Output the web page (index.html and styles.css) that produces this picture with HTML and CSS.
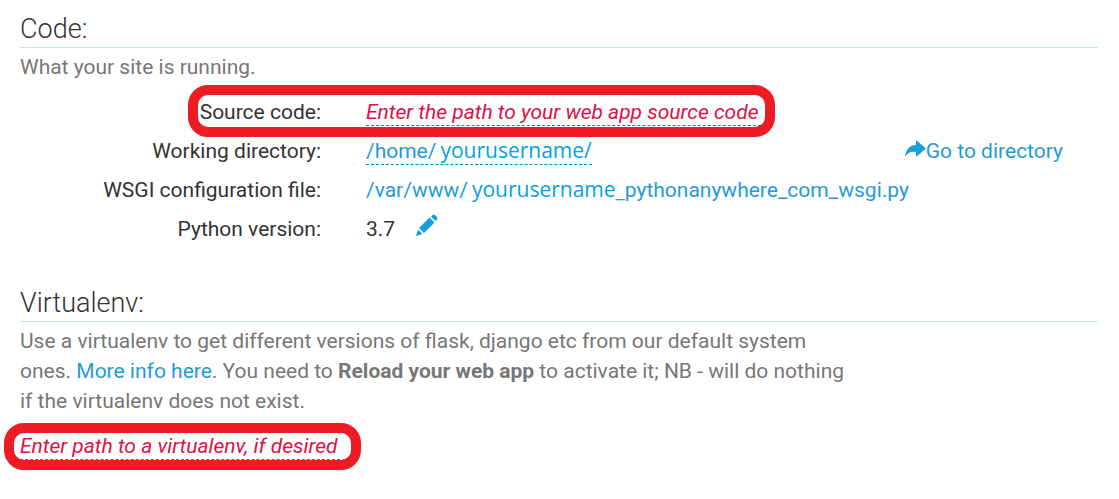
FILE: index.html
```html
<!DOCTYPE html>
<html lang="en">
<head>
<meta charset="utf-8">
<title>Web app configuration</title>
<link rel="stylesheet" href="styles.css">
</head>
<body>
<main class="page">
  <section class="section">
    <h2 class="heading">Code:</h2>
    <p class="intro">What your site is running.</p>
    <dl class="settings">
      <div class="row row-marked">
        <dt class="label">Source code:</dt>
        <dd class="value"><a class="editable empty" href="#source">Enter the path to your web app source code</a></dd>
      </div>
      <div class="row">
        <dt class="label">Working directory:</dt>
        <dd class="value"><a class="editable" href="#working">/home/<span class="username">yourusername/</span></a></dd>
        <dd class="action"><a class="link goto" href="#files"><svg class="icon" viewBox="0 0 21 18" aria-hidden="true"><path d="M0 17C1 9 5 5 11 5V0L21 8.500L11 17V12C6 11 2 13 0 17Z"/></svg>Go to directory</a></dd>
      </div>
      <div class="row">
        <dt class="label">WSGI configuration file:</dt>
        <dd class="value"><a class="link" href="#wsgi">/var/www/<span class="username">yourusername_</span>pythonanywhere_com_wsgi.py</a></dd>
      </div>
      <div class="row">
        <dt class="label">Python version:</dt>
        <dd class="value version">3.7<button class="edit" type="button" aria-label="Edit Python version"><svg class="pencil" viewBox="0 0 22 22" aria-hidden="true"><path d="M0 22L2 15.500L6.500 20ZM3 14L13.500 3.500L18.500 8.500L8 19ZM15 2.500L16.500 1Q18 0 19 1L21 3Q22 4 21 5.500L19.500 7Z"/></svg></button></dd>
      </div>
    </dl>
  </section>
  <section class="section">
    <h2 class="heading">Virtualenv:</h2>
    <p class="intro narrow">Use a virtualenv to get different versions of flask, django etc from our default system ones. <a class="link" href="#help">More info here</a>. You need to <strong>Reload your web app</strong> to activate it; NB - will do nothing if the virtualenv does not exist.</p>
    <div class="marked"><a class="editable empty" href="#virtualenv">Enter path to a virtualenv, if desired</a></div>
  </section>
</main>
</body>
</html>
```
FILE: styles.css
```css
*, *::after { box-sizing: border-box; }
body {
  margin: 0;
  background: #fff;
  color: #333;
  font: 21px/30px Roboto, "Liberation Sans", sans-serif;
}
.page { padding: 11px 21px 28px 20px; }
.section + .section { margin-top: 36px; }
.heading {
  margin: 0;
  border-bottom: 1px solid #bce8f8;
  font-size: 27px;
  font-weight: 300;
  line-height: 36px;
}
.intro { margin: 4px 0 0; color: #777; }
.narrow { max-width: 830px; }
.settings { margin: 11px 0 0; }
.row {
  display: grid;
  grid-template-columns: 301px 1fr auto;
  height: 39px;
  padding-top: 4px;
  position: relative;
}
.label { text-align: right; }
.value { margin: 0 0 0 45px; white-space: nowrap; }
.action { margin: 0 35px 0 0; }
.link, .editable { color: #1f9bd7; text-decoration: none; }
.editable {
  display: inline-block;
  line-height: 26px;
  border-bottom: 1px dashed #0088cc;
}
.empty { padding-right: 3px; color: #dd1144; font-style: italic; }
.username {
  margin-left: 4px;
  color: #00a2e8;
  font-family: "Open Sans", "Noto Sans", sans-serif;
  line-height: 20px;
}
.icon { width: 21px; height: 18px; fill: #169fdb; }
.pencil { display: block; width: 22px; height: 22px; fill: #169fdb; }
.version { display: flex; gap: 21px; }
.edit { height: 22px; padding: 0; border: 0; background: none; }
.marked { width: fit-content; margin-top: 15px; position: relative; }
.row-marked::after, .marked::after {
  content: "";
  position: absolute;
  border: 10px solid #ed1c24;
  border-radius: 20px;
  pointer-events: none;
}
.row-marked::after { left: 168px; top: -8px; width: 587px; height: 52px; }
.marked::after { inset: -8px -21px -9px -16px; }
```
